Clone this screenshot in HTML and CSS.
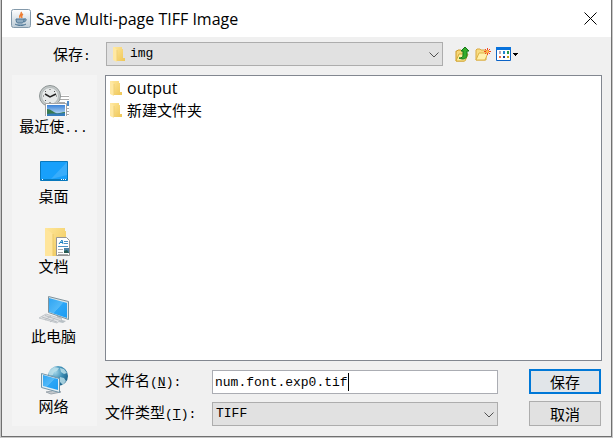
FILE: index.html
```html
<!DOCTYPE html>
<html lang="zh-CN">
  <head>
    <meta charset="utf-8">
    <title>Save Multi-page TIFF Image</title>
    <link rel="stylesheet" href="styles.css">
  </head>
  <body>
    <svg class="defs" aria-hidden="true">
      <defs>
        <linearGradient id="gold" x1="0" y1="0" x2="1" y2="1">
          <stop offset="0" stop-color="#ffe79b"/>
          <stop offset="1" stop-color="#eec656"/>
        </linearGradient>
        <linearGradient id="screen" x1="0" y1="0" x2="1" y2="1">
          <stop offset="0" stop-color="#2ea4f2"/>
          <stop offset=".5" stop-color="#52b9f8"/>
          <stop offset=".52" stop-color="#2ba6f7"/>
          <stop offset="1" stop-color="#1c9cf2"/>
        </linearGradient>
        <linearGradient id="tile" x1="0" y1="0" x2="0" y2="1">
          <stop offset="0" stop-color="#fff"/>
          <stop offset="1" stop-color="#bccbd6"/>
        </linearGradient>
        <linearGradient id="sky" x1="0" y1="0" x2="0" y2="1">
          <stop offset="0" stop-color="#3b83d8"/>
          <stop offset="1" stop-color="#d9eefa"/>
        </linearGradient>
        <radialGradient id="globe" cx=".35" cy=".3" r=".8">
          <stop offset="0" stop-color="#a5d8ea"/>
          <stop offset=".5" stop-color="#3b8db5"/>
          <stop offset="1" stop-color="#17597f"/>
        </radialGradient>
        <symbol id="folder" viewBox="0 0 12 15">
          <path d="M1 0h8v2h1v9h2v3H3L1 13z" fill="url(#gold)"/>
          <path d="M0 0h1l3 3v12l-4-2z" fill="#ffe8a2"/>
          <path d="M4 3v11" stroke="#efd078" fill="none"/>
        </symbol>
      </defs>
    </svg>
    <div class="dialog">
      <header class="titlebar">
        <svg class="java" width="20" height="20" viewBox="0 0 20 20">
          <rect x=".5" y=".5" width="19" height="18" rx="2" fill="url(#tile)" stroke="#8399aa"/>
          <path d="M10 3c2 2-3 3-1 6M12 5c-2 1-2 2-1 4" stroke="#ee7d32" stroke-width="1.5" fill="none"/>
          <path d="M5 10h8c0 3-1 4-2 4H7c-1 0-2-1-2-4zM13 10c3-1 3 2 0 3M4 15c3 2 8 2 11 0" stroke="#4d7594" fill="#8fabc0"/>
        </svg>
        <h1>Save Multi-page TIFF Image</h1>
        <button type="button" class="close" aria-label="关闭">
          <svg width="13" height="13" viewBox="0 0 13 13"><path d="M.5.5l12 12M12.5.5l-12 12" stroke="#000" fill="none"/></svg>
        </button>
      </header>
      <form class="content">
        <div class="toolbar">
          <label for="dir">保存<span class="mono">:</span></label>
          <div class="combo with-icon">
            <select id="dir"><option>img</option></select>
            <svg class="combo-icon" width="12" height="15"><use href="#folder"/></svg>
            <svg class="arrow" width="10" height="6" viewBox="0 0 10 6"><path d="M.5.5L5 5 9.5.5" stroke="#505050" fill="none"/></svg>
          </div>
          <div class="tools">
            <button type="button" aria-label="向上一级">
              <svg width="15" height="16" viewBox="0 0 15 16">
                <path d="M1 15V5h1l1-1h3l1 1h4v8l-2 2z" fill="#f6d778" stroke="#cc9a27"/>
                <path d="M1 15l3-7h9l-3 7z" fill="#fff0a4" stroke="#d6aa35"/>
                <path d="M4 12c3 0 4-1 4-3V5H6l4-4 4 4h-2v4c0 4-4 5-8 3z" fill="#35ad2c" stroke="#16761a"/>
              </svg>
            </button>
            <button type="button" aria-label="新建文件夹">
              <svg width="16" height="14" viewBox="0 0 16 14">
                <path d="M1 13V3l1-1h3l1 1h5v10z" fill="#f8dc83" stroke="#d9a940"/>
                <path d="M1 13l3-7h9l-3 7z" fill="#fff1ac" stroke="#dfb346"/>
                <path d="M12.5 1v7M9 4.500h7M10 2l5 5M15 2l-5 5" stroke="#f4461e" fill="none"/>
                <circle cx="12.5" cy="4.5" r="1.500" fill="#ffc24c"/>
              </svg>
            </button>
            <button type="button" class="view" aria-label="查看菜单">
              <svg width="22" height="14" viewBox="0 0 22 14">
                <path d="M.5.5h14v13H.5z" fill="#fff" stroke="#0c63c6"/>
                <path d="M0 0h15v3H0z" fill="#0872dc"/>
                <path d="M3 4h2v3H3z" fill="#b2a9bc"/>
                <path d="M7 4h2v3H7z" fill="#2087cf"/>
                <path d="M11 4h2v3h-2z" fill="#2b9b4b"/>
                <path d="M3 9h2v2H3z" fill="#f46c43"/>
                <path d="M7 9h2v2H7z" fill="#123a8c"/>
                <path d="M11 9h2v2h-2z" fill="#c6a01d"/>
                <path d="M17 6h5v1h-1v1h-1v1h-1V8h-1V7h-1z" fill="#000"/>
              </svg>
            </button>
          </div>
        </div>
        <div class="main">
          <nav class="places">
            <button type="button">
              <svg width="32" height="32" viewBox="0 0 32 32">
                <path d="M19 11h12v21H19z" fill="#fff"/>
                <path d="M21 12.5h10M21 15.5h10M21 18.5h6M24 21.5h7M28 24.5h3M28 27.5h3M28 30.5h3" stroke="#aaa"/>
                <path d="M29 17h2v5h-2z" fill="#4e8dcc"/>
                <circle cx="12" cy="12" r="10.5" fill="#c4c9c9" stroke="#8d9494"/>
                <circle cx="12" cy="12" r="8.5" fill="#e6e9e9" stroke="#b3baba"/>
                <path d="M12 5v1M12 18v1M5 12h1M18 12h1M7 7l1 1M17 7l-1 1M7 17l1-1" stroke="#555"/>
                <path d="M7 10l5 3 6-3" stroke="#222" stroke-width="1.5" fill="none"/>
                <path d="M7.5 19.5h21v14h-21z" fill="#fff" stroke="#a5a5a5"/>
                <path d="M9 21h18v11H9z" fill="url(#sky)"/>
                <path d="M9 25c4 0 6 3 9 4s5-1 9-1v4H9z" fill="#397b50"/>
                <path d="M9 30c6-1 10 0 18-1v3H9z" fill="#367dbd"/>
              </svg>
              <span>最近使<span class="mono">...</span></span>
            </button>
            <button type="button">
              <svg width="32" height="32" viewBox="0 0 32 32">
                <path d="M2.5 7.5h27v19h-27z" fill="#18a0fb" stroke="#0878bd"/>
                <path d="M29 8v13L13 25z" fill="#39adfb"/>
                <path d="M3 25h26v1H3z" fill="#087bc0"/>
                <path d="M4 25.5h1M23 25.5h1M25 25.5h1M27 25.5h1" stroke="#fff"/>
              </svg>
              <span>桌面</span>
            </button>
            <button type="button">
              <svg width="32" height="32" viewBox="0 0 32 32">
                <path d="M7 4h20v3h1v25H7z" fill="url(#gold)"/>
                <path d="M7 4l8 6v22H7z" fill="#ffe59b"/>
                <path d="M15 10v22" stroke="#ecc968"/>
                <path d="M18.5 13.5h10l3 3v15h-13z" fill="#fff" stroke="#959595"/>
                <path d="M21 20l3-4 1 4M22 18.5h3" stroke="#1680c1" fill="none"/>
                <path d="M26 17.5h4M26 19.5h4M20 22.5h10" stroke="#4a92c6"/>
                <path d="M20 25.5h5M20 28.5h5M20 30.5h10" stroke="#aaa"/>
                <path d="M26 24h5v5h-5z" fill="#4a82a4"/>
                <path d="M26 27l3-1 2 3h-5z" fill="#285a50"/>
              </svg>
              <span>文档</span>
            </button>
            <button type="button">
              <svg width="32" height="32" viewBox="0 0 32 32">
                <path d="M19 21l5 3v2l4 1-3 2-9-2 3-2z" fill="#b8c0c5"/>
                <path d="M10.5 2.5l20 5v18l-20-7z" fill="#dce6ea" stroke="#7e929c"/>
                <path d="M11 4l18 5v15l-18-6z" fill="url(#screen)"/>
                <path d="M1 24l7-4 16 5-5 4z" fill="#e1e3e5" stroke="#c3c8cc"/>
                <path d="M4 23l15 5M7 21.500l15 5M7 26l6-4M12 28l5-4" stroke="#b9bec3"/>
              </svg>
              <span>此电脑</span>
            </button>
            <button type="button">
              <svg width="32" height="32" viewBox="0 0 32 32">
                <circle cx="20" cy="12" r="10" fill="url(#globe)"/>
                <path d="M11 7l5-4 5 1-2 3-3 1-1 3-4 1zM22 4l4 1 3 4-3 1-3-2zM22 13l4 1 2 3-3 4-3-3z" fill="#c2e3ec" opacity=".8"/>
                <path d="M14 24v3l-6 1 5 2 10-2-4-2v-2z" fill="#c2c8cc" stroke="#9da7ae"/>
                <path d="M3.5 9.5l18 5v14l-18-5z" fill="#e5eff4" stroke="#7295a8"/>
                <path d="M5 11l15 4v11L5 22z" fill="url(#screen)"/>
              </svg>
              <span>网络</span>
            </button>
          </nav>
          <div class="pane">
            <ul class="files">
              <li class="latin"><svg width="12" height="15"><use href="#folder"/></svg>output</li>
              <li><svg width="12" height="15"><use href="#folder"/></svg>新建文件夹</li>
            </ul>
            <div class="fields">
              <label for="name">文件名<span class="mono">(<u>N</u>):</span></label>
              <div class="filename">
                <input type="text" id="name" value="num.font.exp0.tif">
                <span class="caret"></span>
              </div>
              <button type="submit" class="btn default">保存</button>
              <label for="type">文件类型<span class="mono">(<u>T</u>):</span></label>
              <div class="combo">
                <select id="type"><option>TIFF</option></select>
                <svg class="arrow" width="10" height="6" viewBox="0 0 10 6"><path d="M.5.5L5 5 9.5.5" stroke="#505050" fill="none"/></svg>
              </div>
              <button type="button" class="btn">取消</button>
            </div>
          </div>
        </div>
      </form>
    </div>
  </body>
</html>
```
FILE: styles.css
```css
* {
  box-sizing: border-box;
}
body {
  margin: 0;
  padding: 0 1px 1px;
  height: 100vh;
  background: #c8c8c8;
  color: #000;
  font-family: "Open Sans", "Noto Sans CJK SC", sans-serif;
  font-size: 15px;
  line-height: 20px;
}
button, input, select {
  font: inherit;
  color: inherit;
  margin: 0;
  padding: 0;
  border: 0;
  border-radius: 0;
  background: none;
}
svg {
  display: block;
  flex: none;
}
.defs {
  position: absolute;
  width: 0;
  height: 0;
}
.mono, input, select {
  font-family: "Liberation Mono", monospace;
  font-size: 13px;
}
.mono {
  line-height: 1;
}
.dialog {
  display: flex;
  flex-direction: column;
  height: 100%;
  border: 1px solid #707070;
  border-top: 0;
  background: #f0f0f0;
}
.titlebar {
  display: flex;
  flex: none;
  align-items: center;
  gap: 5px;
  height: 37px;
  padding: 0 14px 0 9px;
  background: #fff;
}
.titlebar h1 {
  flex: 1;
  margin: 0;
  font-size: 16px;
  font-weight: normal;
}
.content {
  flex: 1;
  display: flex;
  flex-direction: column;
  gap: 9px;
  padding: 5px 9px 10px 10px;
}
.toolbar {
  display: flex;
  align-items: center;
}
.toolbar > label {
  width: 94px;
  padding-left: 41px;
}
.combo {
  position: relative;
  flex: 1;
}
.combo select {
  display: block;
  appearance: none;
  width: 100%;
  height: 24px;
  padding-left: 3px;
  border: 1px solid #adadad;
  background: #e1e1e1;
}
.with-icon select {
  padding-left: 23px;
}
.combo-icon {
  position: absolute;
  top: 5px;
  left: 7px;
}
.arrow {
  position: absolute;
  top: 10px;
  right: 4px;
  pointer-events: none;
}
.tools {
  display: flex;
  align-items: center;
  gap: 5px;
  width: 159px;
  padding-left: 12px;
}
.main {
  flex: 1;
  display: flex;
  gap: 8px;
}
.places {
  display: flex;
  flex-direction: column;
  gap: 18px;
  width: 85px;
  padding: 9px 2px 0 0;
  background: #f4f4f4;
}
.places button {
  display: flex;
  flex-direction: column;
  align-items: center;
}
.pane {
  flex: 1;
  display: flex;
  flex-direction: column;
  gap: 8px;
}
.files {
  flex: 1;
  margin: 0;
  padding: 1px 4px;
  border: 1px solid #828790;
  background: #fff;
  list-style: none;
}
.files li {
  display: flex;
  align-items: center;
  gap: 5px;
  height: 22px;
}
.files .latin {
  font-size: 16px;
}
.fields {
  display: grid;
  grid-template-columns: 107px 1fr 104px;
  row-gap: 7px;
  align-items: end;
}
.fields label {
  height: 24px;
  line-height: 20px;
}
.filename {
  position: relative;
}
.filename input {
  display: block;
  width: 100%;
  height: 24px;
  padding-left: 2px;
  border: 1px solid #abadb3;
  background: #fff;
}
.caret {
  position: absolute;
  top: 3px;
  left: calc(3px + 17ch);
  width: 1px;
  height: 18px;
  background: #000;
  font-family: "Liberation Mono", monospace;
  font-size: 13px;
}
.btn {
  height: 25px;
  margin: 0 1px 0 31px;
  border: 1px solid #adadad;
  background: #e1e1e1;
  line-height: 20px;
}
.btn.default {
  border: 2px solid #0078d7;
  background: #e1e5e9;
}
```
